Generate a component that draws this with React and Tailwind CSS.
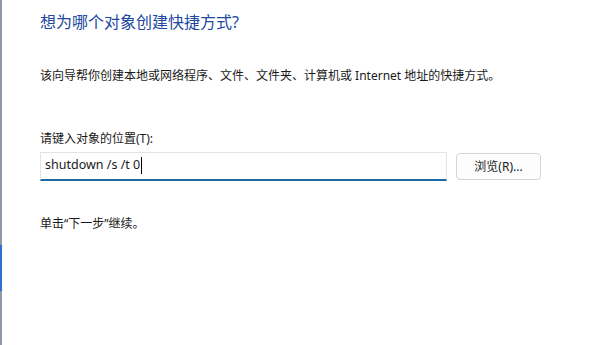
export default function App() {
  return (
    <div
      className="relative w-[614px] h-[345px] overflow-hidden bg-white text-[#1a1a1a]"
      style={{ fontFamily: '"Noto Sans", "Noto Sans CJK SC", sans-serif' }}
    >
      {/* window edge on the left */}
      <div className="absolute left-0 top-0 h-full w-[2px] bg-[#8f9aa6]" />
      <div className="absolute left-0 top-[245px] h-[46px] w-[2px] bg-[#2f6fd0]" />

      <div className="pl-[40px] pt-[10px]">
        <h1 className="text-[16px] leading-[24px] text-[#2149a0]">想为哪个对象创建快捷方式?</h1>

        <p className="mt-[33px] text-[12px] leading-[18px]">
          该向导帮你创建本地或网络程序、文件、文件夹、计算机或 Internet 地址的快捷方式。
        </p>

        <label className="block mt-[45px] text-[12px] leading-[18px]">请键入对象的位置(T):</label>

        <div className="mt-[4px] flex items-center gap-[9px]">
          <div className="w-[407px] h-[29px] flex items-center border border-[#e3e3e3] border-b-2 border-b-[#1f6aa5] pl-[4px] pb-[2px] text-[12.5px]">
            <span>shutdown /s /t 0</span>
            <span className="ml-px w-px h-[17px] bg-black" />
          </div>
          <button className="w-[85px] h-[27px] rounded-[4px] border border-[#d6d6d6] bg-[#fdfdfd] text-[12px] leading-none">
            浏览(R)...
          </button>
        </div>

        <p className="mt-[34px] text-[12px] leading-[18px]">单击“下一步”继续。</p>
      </div>
    </div>
  );
}
